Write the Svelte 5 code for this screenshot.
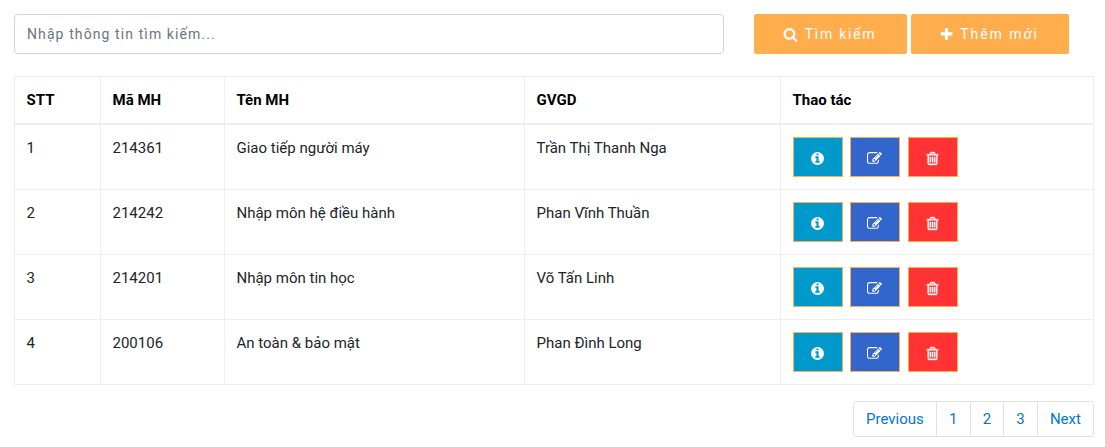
<script>
  const rows = [
    { stt: 1, code: '214361', name: 'Giao tiếp người máy', teacher: 'Trần Thị Thanh Nga' },
    { stt: 2, code: '214242', name: 'Nhập môn hệ điều hành', teacher: 'Phan Vĩnh Thuần' },
    { stt: 3, code: '214201', name: 'Nhập môn tin học', teacher: 'Võ Tấn Linh' },
    { stt: 4, code: '200106', name: 'An toàn & bảo mật', teacher: 'Phan Đình Long' }
  ];

  const pages = ['Previous', '1', '2', '3', 'Next'];

  // FontAwesome 4 glyphs, 1792 viewBox
  const icons = {
    search: 'M1216 832q0-185-131.5-316.5t-316.5-131.5-316.5 131.5-131.5 316.5 131.5 316.5 316.5 131.5 316.5-131.5 131.5-316.5zm512 832q0 52-38 90t-90 38q-54 0-90-38l-343-342q-179 124-399 124-143 0-273.5-55.5t-225-150-150-225-55.5-273.5 55.5-273.5 150-225 225-150 273.5-55.5 273.5 55.5 225 150 150 225 55.5 273.5q0 220-124 399l343 343q37 37 37 90z',
    plus: 'M1600 736v192q0 40-28 68t-68 28h-416v416q0 40-28 68t-68 28h-192q-40 0-68-28t-28-68v-416h-416q-40 0-68-28t-28-68v-192q0-40 28-68t68-28h416v-416q0-40 28-68t68-28h192q40 0 68 28t28 68v416h416q40 0 68 28t28 68z',
    info: 'M1152 1376v-160q0-14-9-23t-23-9h-96v-512q0-14-9-23t-23-9h-320q-14 0-23 9t-9 23v160q0 14 9 23t23 9h96v320h-96q-14 0-23 9t-9 23v160q0 14 9 23t23 9h448q14 0 23-9t9-23zm-128-896v-160q0-14-9-23t-23-9h-192q-14 0-23 9t-9 23v160q0 14 9 23t23 9h192q14 0 23-9t9-23zm640 416q0 209-103 385.5t-279.5 279.5-385.5 103-385.5-103-279.5-279.5-103-385.5 103-385.5 279.5-279.5 385.5-103 385.5 103 279.5 279.5 103 385.5z',
    edit: 'M888 1184l116-116-152-152-116 116v56h96v96h56zm440-720q-16-16-33 1l-350 350q-17 17-1 33t33-1l350-350q17-17 1-33zm80 594v190q0 119-84.5 203.5t-203.5 84.5h-832q-119 0-203.5-84.5t-84.5-203.5v-832q0-119 84.5-203.5t203.5-84.5h832q63 0 117 25 15 7 18 23 3 17-9 29l-49 49q-14 14-32 8-23-6-45-6h-832q-66 0-113 47t-47 113v832q0 66 47 113t113 47h832q66 0 113-47t47-113v-126q0-13 9-22l64-64q15-15 35-7t20 29zm-96-738l288 288-672 672h-288v-288zm444 132l-92 92-288-288 92-92q28-28 68-28t68 28l152 152q28 28 28 68t-28 68z',
    trash: 'M704 736v576q0 14-9 23t-23 9h-64q-14 0-23-9t-9-23v-576q0-14 9-23t23-9h64q14 0 23 9t9 23zm256 0v576q0 14-9 23t-23 9h-64q-14 0-23-9t-9-23v-576q0-14 9-23t23-9h64q14 0 23 9t9 23zm256 0v576q0 14-9 23t-23 9h-64q-14 0-23-9t-9-23v-576q0-14 9-23t23-9h64q14 0 23 9t9 23zm128 724v-948h-896v948q0 22 7 40.5t14.5 27 10.5 8.5h832q3 0 10.5-8.5t14.5-27 7-40.5zm-672-1076h448l-48-117q-7-9-17-11h-317q-10 2-17 11zm928 32v64q0 14-9 23t-23 9h-96v948q0 83-47 143.5t-113 60.5h-832q-66 0-113-57.5t-47-138.5v-956h-96q-14 0-23-9t-9-23v-64q0-14 9-23t23-9h309l70-167q15-37 54-63t79-26h320q40 0 79 26t54 63l70 167h309q14 0 23 9t9 23z'
  };
</script>

<div class="page">
  <div class="search-row">
    <input class="search" type="text" placeholder="Nhập thông tin tìm kiếm..." />
    <button class="top-btn find">
      <svg class="top-icon" viewBox="0 0 1792 1792"><path d={icons.search} /></svg>
      Tìm kiếm
    </button>
    <button class="top-btn add">
      <svg class="top-icon" viewBox="0 0 1792 1792"><path d={icons.plus} /></svg>
      Thêm mới
    </button>
  </div>

  <table>
    <colgroup>
      <col class="c1" />
      <col class="c2" />
      <col class="c3" />
      <col class="c4" />
      <col />
    </colgroup>
    <thead>
      <tr>
        <th>STT</th>
        <th>Mã MH</th>
        <th>Tên MH</th>
        <th>GVGD</th>
        <th>Thao tác</th>
      </tr>
    </thead>
    <tbody>
      {#each rows as row (row.stt)}
        <tr>
          <td>{row.stt}</td>
          <td>{row.code}</td>
          <td>{row.name}</td>
          <td>{row.teacher}</td>
          <td>
            <div class="actions">
              <button class="act info" aria-label="Chi tiết">
                <svg viewBox="0 0 1792 1792"><path d={icons.info} /></svg>
              </button>
              <button class="act edit" aria-label="Sửa">
                <svg viewBox="0 0 1792 1792"><path d={icons.edit} /></svg>
              </button>
              <button class="act del" aria-label="Xoá">
                <svg viewBox="0 0 1792 1792"><path d={icons.trash} /></svg>
              </button>
            </div>
          </td>
        </tr>
      {/each}
    </tbody>
  </table>

  <nav class="pager">
    {#each pages as page}
      <span class="page-link">{page}</span>
    {/each}
  </nav>
</div>

<style>
  :global(body) {
    margin: 0;
    background: #fff;
  }
  .page {
    box-sizing: border-box;
    width: 1105px;
    padding: 14px 11px 0 14px;
    font-family: Roboto, "Liberation Sans", sans-serif;
    font-size: 15px;
    line-height: 1.5;
    color: #212529;
  }
  .search-row {
    display: flex;
    height: 40px;
    margin-bottom: 22px;
  }
  .search {
    box-sizing: border-box;
    width: 710px;
    height: 40px;
    padding: 0 12px;
    margin-right: 30px;
    border: 1px solid #ced4da;
    border-radius: 4px;
    font-family: inherit;
    font-size: 14px;
    letter-spacing: 1.1px;
    color: #495057;
    outline: none;
  }
  .search::placeholder {
    color: #6c757d;
    opacity: 1;
  }
  .top-btn {
    display: flex;
    align-items: center;
    justify-content: center;
    gap: 7px;
    height: 40px;
    padding: 0 2px 0 0;
    border: none;
    border-radius: 2px;
    background: #ffad4d;
    color: #fff;
    font-family: inherit;
    font-size: 14px;
    letter-spacing: 1.7px;
  }
  .find {
    width: 153px;
    margin-right: 4px;
  }
  .add {
    width: 158px;
    gap: 6px;
    letter-spacing: 1.95px;
  }
  .top-icon {
    width: 15px;
    height: 15px;
    fill: #fff;
  }
  table {
    box-sizing: border-box;
    width: 1080px;
    table-layout: fixed;
    border-collapse: collapse;
    border: 1px solid #eee;
  }
  .c1 {
    width: 86px;
  }
  .c2 {
    width: 124px;
  }
  .c3 {
    width: 300px;
  }
  .c4 {
    width: 256px;
  }
  th,
  td {
    padding: 12px 12px 12px 11.5px;
    border: 1px solid #eee;
    text-align: left;
    vertical-align: top;
    font-size: 15px;
  }
  th {
    padding-bottom: 11px;
    font-weight: 700;
    color: #000;
    border-bottom-width: 2px;
  }
  td {
    color: #212529;
  }
  .actions {
    display: flex;
    gap: 7.5px;
  }
  .act {
    display: flex;
    align-items: flex-end;
    justify-content: center;
    box-sizing: border-box;
    width: 50px;
    height: 40px;
    padding: 0 1px 10px 0;
    border: 1px solid #ffad4d;
    color: #fff;
  }
  .act svg {
    width: 15px;
    height: 15px;
    fill: #fff;
  }
  .del svg {
    stroke: #fff;
    stroke-width: 50;
  }
  .info {
    background: #0099cc;
  }
  .edit {
    background: #3366cc;
  }
  .del {
    background: #ff3333;
  }
  .pager {
    display: flex;
    justify-content: flex-end;
    width: 1080px;
    margin-top: 16px;
  }
  .page-link {
    padding: 6px 12.1px;
    margin-left: -1px;
    border: 1px solid #dee2e6;
    color: #0275d8;
    line-height: 22px;
  }
  .page-link:first-child {
    border-radius: 4px 0 0 4px;
  }
  .page-link:last-child {
    border-radius: 0 4px 4px 0;
  }
</style>
